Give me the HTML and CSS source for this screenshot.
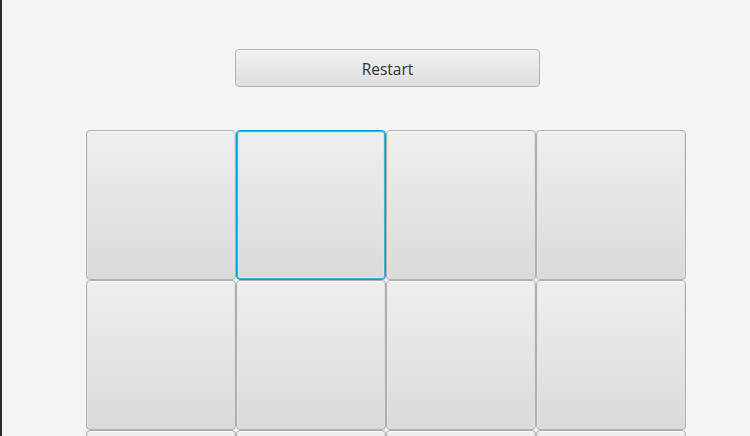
FILE: index.html
```html
<!DOCTYPE html>
<html>
<head>
<meta charset="utf-8">
<link rel="stylesheet" href="styles.css">
</head>
<body>
<div class="window">
  <div class="top">
    <button class="restart">Restart</button>
  </div>
  <div class="board">
    <div class="tile"></div>
    <div class="tile focused"></div>
    <div class="tile"></div>
    <div class="tile"></div>
    <div class="tile"></div>
    <div class="tile"></div>
    <div class="tile"></div>
    <div class="tile"></div>
    <div class="tile"></div>
    <div class="tile"></div>
    <div class="tile"></div>
    <div class="tile"></div>
  </div>
</div>
</body>
</html>
```
FILE: styles.css
```css
html, body {
  margin: 0;
  padding: 0;
  width: 750px;
  height: 436px;
  overflow: hidden;
  background: #f4f4f4;
}
.window {
  height: 436px;
  overflow: hidden;
  border-left: 2px solid #2b2b2b;
  box-sizing: border-box;
  display: flex;
  flex-direction: column;
}
.top {
  padding-top: 49px;
  padding-left: 233px;
}
.restart {
  display: block;
  width: 305px;
  height: 38px;
  margin: 0;
  padding: 1px 0 0 0;
  border: 1px solid #b3b3b3;
  border-radius: 4px;
  background: linear-gradient(to bottom, #f1f1f1, #dedede);
  box-shadow: inset 0 1px 0 #f9f9f9;
  font-family: "Open Sans", "Noto Sans", sans-serif;
  font-size: 15.5px;
  color: #333333;
}
.board {
  flex: none;
  margin-top: 43px;
  margin-left: 84px;
  display: grid;
  grid-template-columns: repeat(4, 150px);
  grid-auto-rows: 150px;
}
.tile {
  box-sizing: border-box;
  border: 1px solid #b0b0b0;
  border-radius: 4px;
  background: linear-gradient(to bottom, #efefef, #dadada);
  box-shadow: inset 0 1px 0 #f8f8f8, inset 1px 0 0 #e4e4e4, inset -1px 0 0 #dedede;
}
.tile.focused {
  border: 1px solid #039ed3;
  box-shadow: inset 0 0 0 1px #3fb3de, inset 0 0 0 2px #cfe6ef;
}
```
